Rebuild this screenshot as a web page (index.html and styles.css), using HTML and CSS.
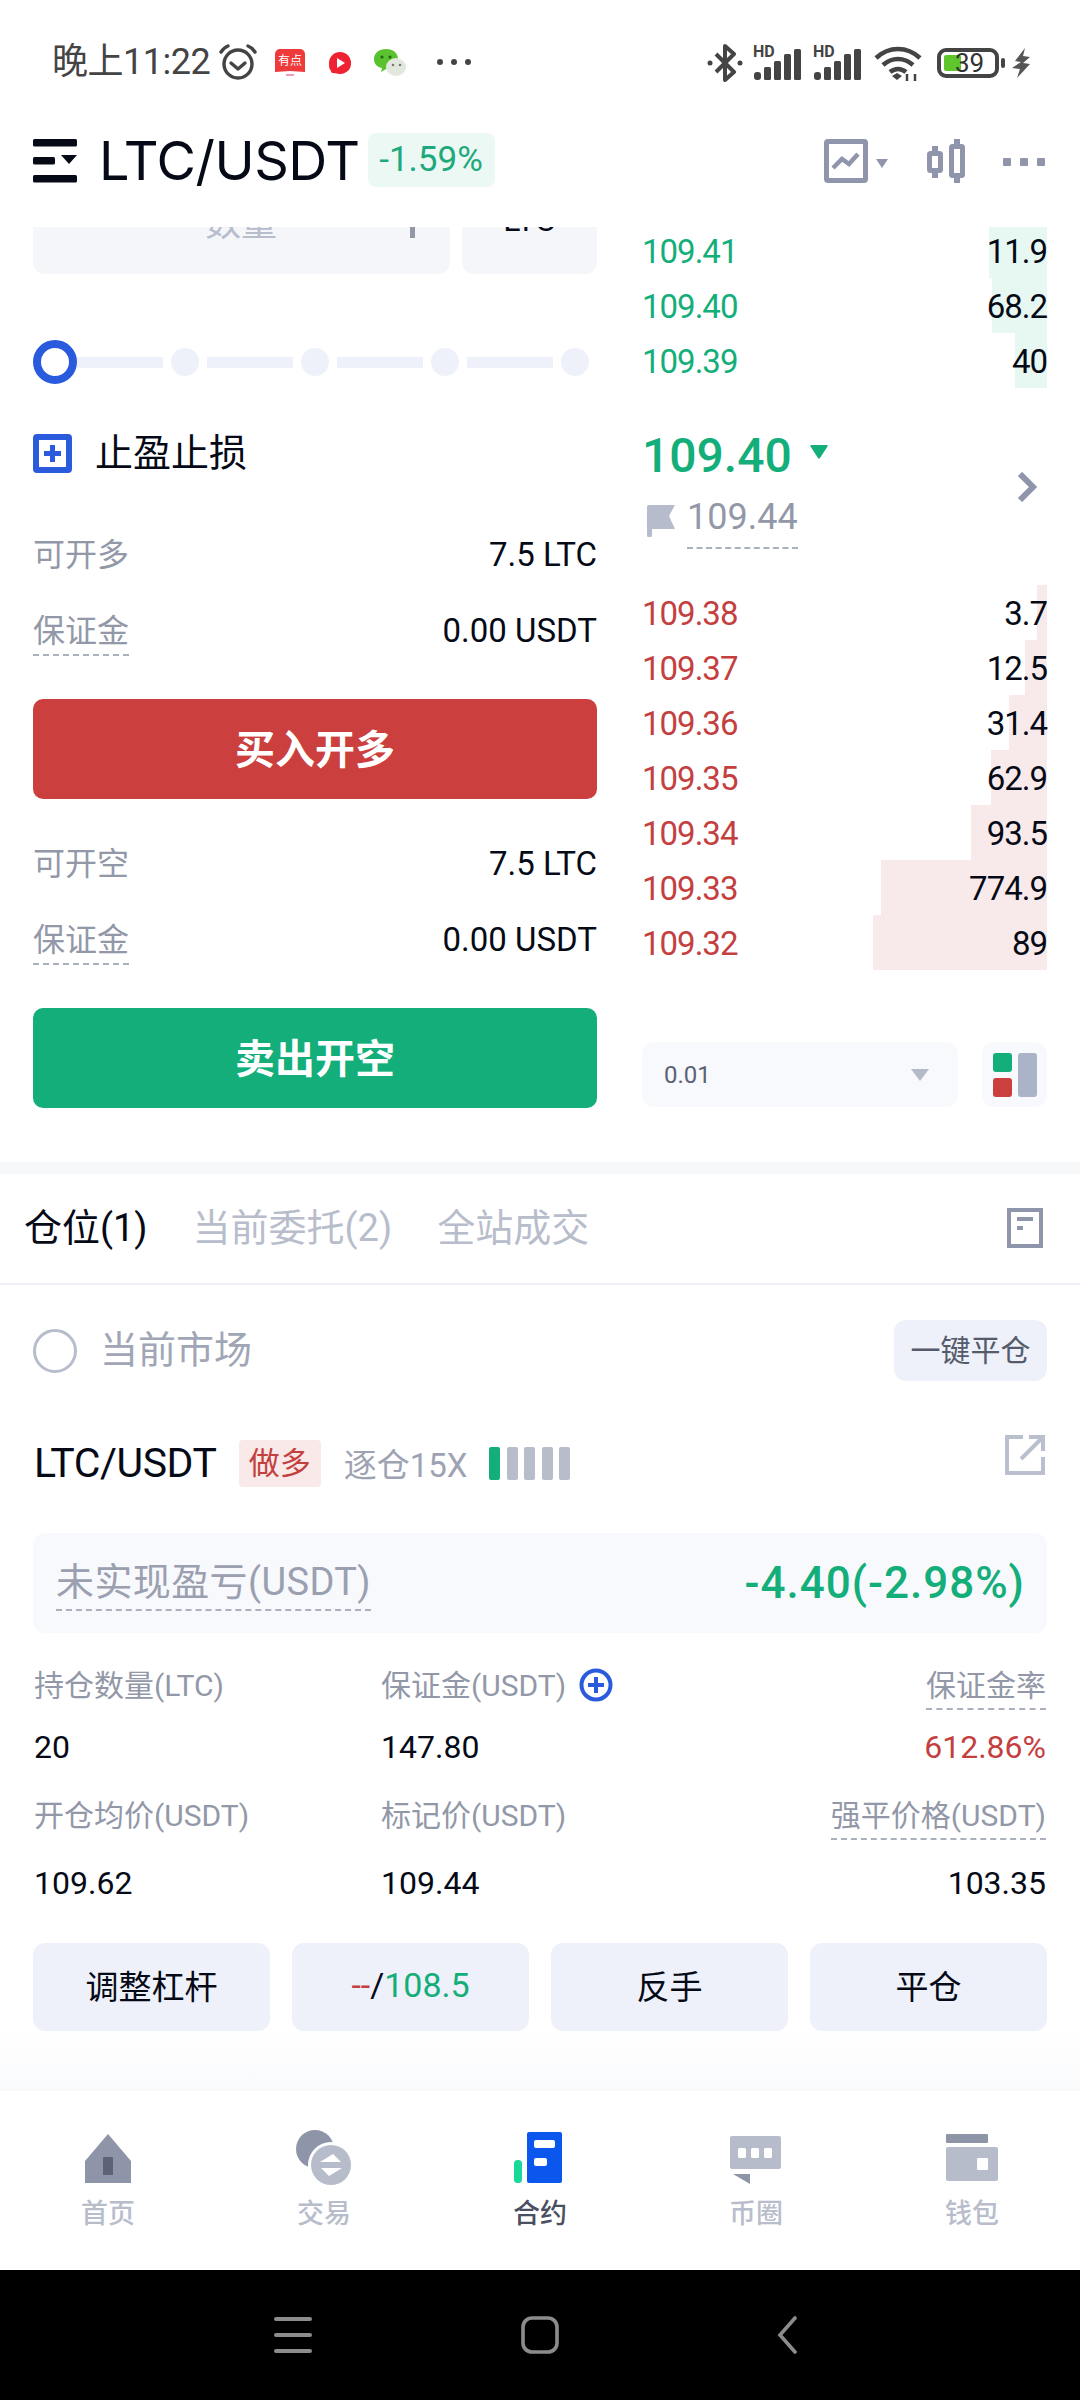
FILE: index.html
```html
<!DOCTYPE html>
<html lang="zh-CN">
<head>
  <meta charset="UTF-8" />
  <meta name="viewport" content="width=device-width, initial-scale=1.0"/>
  <title>LTC/USDT</title>
  <link rel="stylesheet" href="styles.css">
</head>
<body>
  <div class="status">
    <span class="clock">晚上11:22</span>
    <svg class="ic-alarm" width="40" height="38" viewBox="0 0 40 38" fill="none" stroke="#444" stroke-width="3.4" stroke-linecap="round" stroke-linejoin="round">
      <circle cx="20" cy="21" r="14"/><path d="M13 20l7 6 7-6"/><path d="M3 9c2-3 4-5 7-6M37 9c-2-3-4-5-7-6"/>
    </svg>
    <svg class="ic-app1" width="30" height="28" viewBox="0 0 30 28">
      <path d="M5 0h20a5 5 0 0 1 5 5v18l-15-1-15 1V5a5 5 0 0 1 5-5z" fill="#ee3a3a"/>
      <text x="15" y="16" text-anchor="middle" font-size="12" fill="#fff" class="app-text">有点</text>
      <path d="M11 26h8" stroke="#f07a9a" stroke-width="1.5"/>
    </svg>
    <svg class="ic-app2" width="22" height="23" viewBox="0 0 22 23">
      <path d="M11 0a11 11 0 1 1-2 21.800C6 21 2 22 2 19 0 17 0 14 0 11A11 11 0 0 1 11 0z" fill="#ee2230"/>
      <path d="M8 6l8 5-8 5z" fill="#fff"/>
    </svg>
    <svg class="ic-app3" width="32" height="28" viewBox="0 0 32 28">
      <path d="M12 0c7 0 12 4 12 10s-5 10-12 10l-5 3 1-4C3 18 0 15 0 10 0 4 5 0 12 0z" fill="#5ac22e"/>
      <circle cx="8" cy="8" r="1.600" fill="#1f6b14"/><circle cx="16" cy="8" r="1.600" fill="#1f6b14"/>
      <ellipse cx="22" cy="18" rx="10" ry="9" fill="#e3e8de"/>
      <circle cx="19" cy="16" r="1.300" fill="#777"/><circle cx="26" cy="16" r="1.300" fill="#777"/>
    </svg>
    <span class="status-dots"><i></i><i></i><i></i></span>
    <span class="spacer"></span>
    <svg class="ic-bt" width="36" height="38" viewBox="0 0 36 38" fill="none" stroke="#444" stroke-width="4" stroke-linejoin="round">
      <path d="M9 10l18 18-9 8V2l9 8L9 28"/><circle cx="3" cy="19" r="2.500" fill="#444" stroke="none"/><circle cx="33" cy="19" r="2.500" fill="#444" stroke="none"/>
    </svg>
    <span class="signal"><b>HD</b><svg width="50" height="32" viewBox="0 0 50 32" fill="#444"><rect x="1" y="24" width="7" height="8" rx="3"/><rect x="11" y="19" width="7" height="13" rx="1.500"/><rect x="21" y="13" width="7" height="19" rx="1.500"/><rect x="31" y="6" width="7" height="26" rx="1.500"/><rect x="41" y="1" width="7" height="31" rx="1.500"/></svg></span>
    <span class="signal"><b>HD</b><svg width="50" height="32" viewBox="0 0 50 32" fill="#444"><rect x="1" y="24" width="7" height="8" rx="3"/><rect x="11" y="19" width="7" height="13" rx="1.500"/><rect x="21" y="13" width="7" height="19" rx="1.500"/><rect x="31" y="6" width="7" height="26" rx="1.500"/><rect x="41" y="1" width="7" height="31" rx="1.500"/></svg></span>
    <svg class="ic-wifi" width="48" height="36" viewBox="0 0 48 36" fill="none" stroke="#444" stroke-width="4.600">
      <path d="M2 12c13-12 31-12 44 0M9 19c9-8 21-8 30 0M16 26c5-4 11-4 16 0"/>
      <path d="M18 30l5-3 5 3-5 4z" fill="#444" stroke="none"/>
      <path d="M33 35v-7M41 35v-7" stroke-width="2.500"/>
    </svg>
    <span class="battery"><span class="battery-fill"></span><span class="battery-num">39</span></span>
    <span class="battery-nub"></span>
    <svg class="ic-bolt" width="18" height="30" viewBox="0 0 18 30"><path d="M13 0L3 13l6 1-9 6 8 1-3 9 13-14-7-1 7-6-7-1z" fill="#555"/></svg>
  </div>

  <div class="topbar">
    <svg class="ic-menu" width="44" height="44" viewBox="0 0 44 44" fill="#060a17">
      <rect y="0" width="44" height="7.500" rx="1.500"/><rect y="18" width="22" height="7.500" rx="1.500"/><path d="M28 16h16l-8 9z"/><rect y="36" width="44" height="7.500" rx="1.500"/>
    </svg>
    <span class="pair">LTC/USDT</span>
    <span class="change">-1.59%</span>
    <span class="spacer"></span>
    <svg class="ic-chart" width="44" height="44" viewBox="0 0 44 44" fill="none" stroke="#8f95aa">
      <rect x="2.500" y="2.500" width="39" height="39" rx="1.500" stroke-width="5"/><path d="M9 29l9-9 7 5 9-10" stroke-width="4.500"/>
    </svg>
    <svg class="ic-caret" width="12" height="9" viewBox="0 0 12 9"><path d="M0 0h12L6 9z" fill="#8f95aa"/></svg>
    <svg class="ic-candle" width="40" height="44" viewBox="0 0 40 44" fill="none" stroke="#8f95aa">
      <path d="M9 7v32M31 0v44" stroke-width="6"/>
      <rect x="3.500" y="14.500" width="11" height="17" rx="1" fill="#fff" stroke-width="5"/><rect x="25.500" y="7.500" width="11" height="29" rx="1" fill="#fff" stroke-width="5"/>
    </svg>
    <span class="more"><i></i><i></i><i></i></span>
  </div>

  <div class="trade">
    <div class="trade-left">
      <div class="amount-row">
        <div class="amount-input"><span class="placeholder">数量</span><span class="caret"></span></div>
        <div class="amount-unit">LTC</div>
      </div>

      <div class="slider">
        <span class="knob"></span>
        <span class="track"></span><span class="dot"></span>
        <span class="track"></span><span class="dot"></span>
        <span class="track"></span><span class="dot"></span>
        <span class="track"></span><span class="dot"></span>
      </div>

      <div class="tpsl">
        <svg width="39" height="39" viewBox="0 0 39 39"><rect x="3" y="3" width="33" height="33" rx="1" fill="#fff" stroke="#2a5bdc" stroke-width="6"/><path d="M19.500 11v17M11 19.500h17" stroke="#2a5bdc" stroke-width="5"/></svg>
        <span>止盈止损</span>
      </div>

      <div class="info first"><span class="info-label">可开多</span><span class="info-value">7.5 LTC</span></div>
      <div class="info"><span class="info-label dashed">保证金</span><span class="info-value">0.00 USDT</span></div>
      <button class="action buy">买入开多</button>

      <div class="info first sell-first"><span class="info-label">可开空</span><span class="info-value">7.5 LTC</span></div>
      <div class="info"><span class="info-label dashed">保证金</span><span class="info-value">0.00 USDT</span></div>
      <button class="action sell">卖出开空</button>
    </div>

    <div class="trade-right">
      <div class="book">
        <div class="level ask"><i style="width:58px"></i><span class="price">109.41</span><span class="qty">11.9</span></div>
        <div class="level ask"><i style="width:55px"></i><span class="price">109.40</span><span class="qty">68.2</span></div>
        <div class="level ask"><i style="width:32px"></i><span class="price">109.39</span><span class="qty">40</span></div>
      </div>

      <div class="last">
        <div class="last-main">
          <div class="last-price"><span>109.40</span><svg width="18" height="14" viewBox="0 0 18 14"><path d="M1 0h16q1 0 .5 1.500L10 13q-1 1-2 0L.5 1.500Q0 0 1 0z" fill="#13ae7a"/></svg></div>
          <div class="mark">
            <svg width="28" height="32" viewBox="0 0 28 32"><path d="M0 2a2 2 0 0 1 2-2h26l-6 11 6 13H5v6a2.500 2.500 0 0 1-5 0z" fill="#b6bccb"/></svg>
            <span class="dashed">109.44</span>
          </div>
        </div>
        <svg class="ic-next" width="20" height="30" viewBox="0 0 20 30"><path d="M3 2l13 13L3 28" fill="none" stroke="#9095ab" stroke-width="6"/></svg>
      </div>

      <div class="book">
        <div class="level bid"><i style="width:10px"></i><span class="price">109.38</span><span class="qty">3.7</span></div>
        <div class="level bid"><i style="width:22px"></i><span class="price">109.37</span><span class="qty">12.5</span></div>
        <div class="level bid"><i style="width:38px"></i><span class="price">109.36</span><span class="qty">31.4</span></div>
        <div class="level bid"><i style="width:56px"></i><span class="price">109.35</span><span class="qty">62.9</span></div>
        <div class="level bid"><i style="width:76px"></i><span class="price">109.34</span><span class="qty">93.5</span></div>
        <div class="level bid"><i style="width:166px"></i><span class="price">109.33</span><span class="qty">774.9</span></div>
        <div class="level bid"><i style="width:174px"></i><span class="price">109.32</span><span class="qty">89</span></div>
      </div>

      <div class="depth">
        <div class="depth-select"><span>0.01</span><svg width="18" height="12" viewBox="0 0 18 12"><path d="M0 0h18L9 12z" fill="#b4bac8"/></svg></div>
        <div class="depth-mode">
          <svg width="44" height="44" viewBox="0 0 44 44"><rect width="19" height="19" rx="3" fill="#13ae7a"/><rect y="25" width="19" height="19" rx="3" fill="#cb3f3e"/><rect x="25" width="19" height="44" rx="3" fill="#abb3c9"/></svg>
        </div>
      </div>
    </div>
  </div>

  <div class="band"></div>

  <div class="tabs">
    <span class="tab active">仓位(1)</span>
    <span class="tab">当前委托(2)</span>
    <span class="tab">全站成交</span>
    <span class="spacer"></span>
    <svg width="36" height="40" viewBox="0 0 36 40" fill="none"><rect x="2" y="2" width="32" height="36" stroke="#8f95aa" stroke-width="4"/><path d="M10 11h16M10 20h6" stroke="#8f95aa" stroke-width="4"/></svg>
  </div>

  <div class="market">
    <span class="radio"></span>
    <span class="market-name">当前市场</span>
    <span class="spacer"></span>
    <button class="close-all">一键平仓</button>
  </div>

  <div class="pos-head">
    <span class="pos-pair">LTC/USDT</span>
    <span class="side">做多</span>
    <span class="margin-mode">逐仓15X</span>
    <span class="risk"><i class="on"></i><i></i><i></i><i></i><i></i></span>
    <span class="spacer"></span>
    <svg width="40" height="40" viewBox="0 0 40 40" fill="none" stroke="#b9bfcc" stroke-width="4"><path d="M18 2H2v36h36V22"/><path d="M16 24L36 4M24 2h14v14" /></svg>
  </div>

  <div class="pnl">
    <span class="pnl-label dashed">未实现盈亏(USDT)</span>
    <span class="pnl-value">-4.40(-2.98%)</span>
  </div>

  <div class="pos-grid">
    <div class="pos-label">持仓数量(LTC)</div>
    <div class="pos-label">保证金(USDT)<svg width="34" height="34" viewBox="0 0 34 34" fill="none" stroke="#2a5bdc"><circle cx="17" cy="17" r="14.500" stroke-width="4"/><path d="M17 9v16M9 17h16" stroke-width="4"/></svg></div>
    <div class="pos-label right"><span class="dashed">保证金率</span></div>
    <div class="pos-val">20</div>
    <div class="pos-val">147.80</div>
    <div class="pos-val right red">612.86%</div>
    <div class="pos-label">开仓均价(USDT)</div>
    <div class="pos-label">标记价(USDT)</div>
    <div class="pos-label right"><span class="dashed">强平价格(USDT)</span></div>
    <div class="pos-val low">109.62</div>
    <div class="pos-val low">109.44</div>
    <div class="pos-val low right">103.35</div>
  </div>

  <div class="pos-actions">
    <button>调整杠杆</button>
    <button class="tpsl-btn"><span class="red">--</span>/<span class="green">108.5</span></button>
    <button>反手</button>
    <button>平仓</button>
  </div>

  <div class="fade"></div>

  <nav class="tabbar">
    <div class="tabbar-item">
      <svg width="56" height="58" viewBox="0 0 56 58"><path d="M28 6l23 27v22H5V33z" fill="#8f95a9"/><rect x="23" y="29" width="10" height="18" fill="#5c6278"/></svg>
      <span>首页</span>
    </div>
    <div class="tabbar-item">
      <svg width="56" height="58" viewBox="0 0 56 58"><circle cx="19" cy="21" r="19" fill="#8f95a9"/><circle cx="35" cy="37" r="23" fill="#fff"/><circle cx="35" cy="37" r="20" fill="#b7bccb"/><path d="M24 34h21l-8-8zM46 40H25l8 8z" fill="#fff"/></svg>
      <span>交易</span>
    </div>
    <div class="tabbar-item active">
      <svg width="56" height="58" viewBox="0 0 56 58"><rect x="2" y="32" width="8" height="23" rx="3.500" fill="#19d99a"/><rect x="15" y="4" width="35" height="51" rx="2" fill="#0b57ee"/><rect x="22" y="12" width="21" height="8" rx="2" fill="#fff"/><rect x="22" y="30" width="13" height="8" rx="2" fill="#fff"/></svg>
      <span>合约</span>
    </div>
    <div class="tabbar-item">
      <svg width="56" height="58" viewBox="0 0 56 58"><rect x="2" y="8" width="51" height="33" rx="2" fill="#b7bccb"/><rect x="10" y="20" width="8" height="10" rx="1.500" fill="#fff"/><rect x="23" y="20" width="8" height="10" rx="1.500" fill="#fff"/><rect x="36" y="20" width="8" height="10" rx="1.500" fill="#fff"/><path d="M5 46h17v10z" fill="#8f95a9"/></svg>
      <span>币圈</span>
    </div>
    <div class="tabbar-item">
      <svg width="56" height="58" viewBox="0 0 56 58"><rect x="2" y="6" width="42" height="9" rx="1" fill="#8f95a9"/><rect x="2" y="19" width="52" height="34" rx="2" fill="#b7bccb"/><rect x="33" y="30" width="11" height="12" rx="1" fill="#fff"/></svg>
      <span>钱包</span>
    </div>
  </nav>

  <div class="softkeys">
    <svg width="38" height="36" viewBox="0 0 38 36" fill="none" stroke="#8c8c8c" stroke-width="4" stroke-linecap="round"><path d="M2 2h34M2 18h34M2 34h34"/></svg>
    <svg width="38" height="38" viewBox="0 0 38 38" fill="none" stroke="#8c8c8c" stroke-width="3.600"><rect x="2" y="2" width="34" height="34" rx="9"/></svg>
    <svg width="20" height="38" viewBox="0 0 20 38" fill="none" stroke="#8c8c8c" stroke-width="3.600" stroke-linecap="round"><path d="M18 2L3 19l15 17"/></svg>
  </div>
</body>
</html>
```

FILE: styles.css
```css
:root {
  --text: #060a17;
  --muted: #9298a8;
  --light: #b8bdcc;
  --green: #13ae7a;
  --red: #c4403f;
  --blue: #2a5bdc;
  --soft: #eef1f9;
  --softer: #f8f9fc;
}

* {
  box-sizing: border-box;
}

html, body {
  margin: 0;
  padding: 0;
}

body {
  width: 1080px;
  height: 2400px;
  overflow: hidden;
  background: #fff;
  color: var(--text);
  font-family: Roboto, "Noto Sans CJK SC", sans-serif;
}

button {
  border: none;
  font-family: inherit;
  padding: 0;
}

.spacer {
  flex: 1;
}

.dashed {
  display: inline-block;
  border-bottom: 2px dashed #aab0be;
}

.red { color: var(--red); }
.green { color: var(--green); }

/* status bar */
.status {
  height: 110px;
  padding: 44px 50px 0 52px;
  display: flex;
  align-items: flex-start;
  color: #444;
}

.clock {
  font-size: 36px;
  line-height: 36px;
  width: 166px;
  letter-spacing: -0.5px;
}

.app-text {
  font-family: "Noto Sans CJK SC", sans-serif;
}

.ic-app1 { margin: 5px 0 0 17px; }
.ic-app2 { margin: 8px 0 0 24px; }
.ic-app3 { margin: 5px 0 0 23px; }
.ic-alarm { margin-top: -1px; }

.status-dots {
  display: flex;
  gap: 8px;
  margin: 15px 0 0 31px;
}

.status-dots i {
  width: 6px;
  height: 6px;
  border-radius: 50%;
  background: #444;
}

.signal {
  position: relative;
  width: 50px;
  height: 38px;
  margin-left: 10px;
}

.signal:first-of-type { margin-left: 12px; }

.signal b {
  position: absolute;
  left: 0;
  top: 0;
  font-size: 16px;
  line-height: 16px;
  font-weight: 700;
}

.signal svg {
  position: absolute;
  left: 0;
  top: 4px;
}

.ic-wifi { margin: 2px 0 0 11px; }

.battery {
  position: relative;
  width: 62px;
  height: 30px;
  margin: 4px 0 0 15px;
  border: 4px solid #444;
  border-radius: 9px;
}

.battery-fill {
  position: absolute;
  left: 3px;
  top: 3px;
  bottom: 3px;
  width: 17px;
  background: #5fc52c;
  border-radius: 2px;
}

.battery-num {
  position: absolute;
  left: 14px;
  top: -3px;
  font-size: 26px;
  line-height: 28px;
  color: #333;
}

.battery-nub {
  width: 4px;
  height: 10px;
  margin: 14px 0 0 2px;
  background: #444;
  border-radius: 2px;
}

.ic-bolt { margin: 4px 0 0 7px; }

/* top bar */
.topbar {
  height: 117px;
  padding: 29px 35px 0 33px;
  display: flex;
  align-items: flex-start;
}

.pair {
  margin-left: 22px;
  font-family: Inter, sans-serif;
  font-size: 54px;
  line-height: 44px;
  letter-spacing: -0.5px;
}

.change {
  margin: -6px 0 0 8px;
  width: 127px;
  height: 54px;
  background: #ecf8f4;
  border-radius: 8px;
  color: #1ea97c;
  font-size: 35px;
  line-height: 54px;
  text-align: center;
}

.ic-caret { margin: 20px 0 0 8px; }
.ic-candle { margin-left: 38px; }

.more {
  display: flex;
  gap: 9px;
  margin: 19px 0 0 37px;
}

.more i {
  width: 8px;
  height: 8px;
  background: #8f95aa;
  border-radius: 1px;
}

/* trade panel */
.trade {
  height: 935px;
  padding: 0 33px;
  display: flex;
  justify-content: space-between;
  overflow: hidden;
}

.trade-left {
  width: 564px;
}

.trade-right {
  width: 405px;
}

.amount-row {
  display: flex;
  gap: 12px;
  height: 108px;
  margin-top: -61px;
}

.amount-input, .amount-unit {
  display: flex;
  align-items: center;
  background: #f4f6fa;
  border-radius: 12px;
  height: 108px;
}

.amount-input {
  width: 417px;
  padding: 0 35px 0 172px;
  justify-content: space-between;
}

.placeholder {
  font-size: 36px;
  color: var(--light);
}

.caret {
  width: 5px;
  height: 36px;
  background: #9298a8;
}

.amount-unit {
  width: 135px;
  justify-content: center;
  font-size: 32px;
}

.slider {
  display: flex;
  align-items: center;
  height: 44px;
  margin-top: 66px;
}

.knob {
  width: 44px;
  height: 44px;
  flex: none;
  border: 8px solid var(--blue);
  border-radius: 50%;
}

.track {
  width: 86px;
  height: 11px;
  background: var(--soft);
}

.dot {
  width: 28px;
  height: 28px;
  margin: 0 8px;
  background: var(--soft);
  border-radius: 50%;
}

.tpsl {
  display: flex;
  align-items: center;
  gap: 23px;
  height: 39px;
  margin-top: 50px;
  font-size: 38px;
}

.tpsl span {
  margin-top: -8px;
}

.info {
  display: flex;
  justify-content: space-between;
  align-items: flex-start;
  height: 48px;
  margin-top: 28px;
}

.info.first {
  margin-top: 59px;
}

.info.sell-first {
  margin-top: 42px;
}

.info-label {
  font-size: 32px;
  line-height: 46px;
  color: var(--muted);
}

.info-value {
  font-size: 33px;
  line-height: 46px;
}

.action {
  display: block;
  width: 100%;
  height: 100px;
  margin-top: 43px;
  padding-bottom: 5px;
  border-radius: 10px;
  color: #fff;
  font-size: 40px;
  font-weight: 700;
}

.buy { background: #cb3f3e; }
.sell { background: var(--green); }

/* order book */
.book {
  margin-top: -4px;
}

.last + .book {
  margin-top: 0;
}

.level {
  position: relative;
  display: flex;
  justify-content: space-between;
  align-items: center;
  height: 55px;
  font-size: 33px;
}

.level i {
  position: absolute;
  right: 0;
  top: 0;
  bottom: 0;
}

.level span {
  position: relative;
  top: 1px;
  letter-spacing: -1px;
}

.ask i { background: #e7f7f1; }
.bid i { background: #f8eaea; }
.ask .price { color: var(--green); }
.bid .price { color: var(--red); }

.last {
  display: flex;
  align-items: center;
  justify-content: space-between;
  height: 197px;
  padding-right: 10px;
}

.last-price {
  display: flex;
  align-items: center;
  gap: 18px;
  margin-top: 2px;
  color: var(--green);
  font-size: 48px;
  line-height: 58px;
  font-weight: 500;
}

.last-price svg {
  margin-top: -8px;
}

.mark {
  display: flex;
  align-items: flex-start;
  gap: 12px;
  margin-top: 10px;
  padding-left: 5px;
  color: var(--muted);
  font-size: 36px;
  line-height: 44px;
}

.mark svg {
  margin-top: 10px;
}

.mark .dashed {
  padding-bottom: 8px;
}

.depth {
  display: flex;
  justify-content: space-between;
  margin-top: 72px;
}

.depth-select {
  display: flex;
  align-items: center;
  justify-content: space-between;
  width: 316px;
  height: 65px;
  padding: 0 29px 0 22px;
  background: var(--softer);
  border-radius: 12px;
  color: #5a6274;
  font-size: 24px;
}

.depth-mode {
  display: flex;
  align-items: center;
  justify-content: center;
  width: 65px;
  height: 65px;
  background: var(--softer);
  border-radius: 12px;
}

.band {
  height: 12px;
  background: #f7f8fa;
}

/* position tabs */
.tabs {
  display: flex;
  align-items: center;
  gap: 45px;
  height: 111px;
  padding: 0 37px 0 24px;
  border-bottom: 2px solid var(--soft);
}

.tab {
  margin-top: -8px;
  font-size: 38px;
  color: var(--light);
}

.tabs svg {
  margin-top: -2px;
}

.tab.active {
  color: var(--text);
}

.market {
  display: flex;
  align-items: center;
  height: 61px;
  margin-top: 35px;
  padding: 0 33px;
}

.radio {
  width: 44px;
  height: 44px;
  border: 3px solid var(--light);
  border-radius: 50%;
}

.market-name {
  margin: -8px 0 0 23px;
  font-size: 38px;
  color: #a0a6b5;
}

.close-all {
  width: 153px;
  height: 61px;
  padding-bottom: 5px;
  background: var(--soft);
  border-radius: 12px;
  color: #555b6b;
  font-size: 30px;
}

.pos-head {
  display: flex;
  align-items: center;
  height: 60px;
  margin-top: 52px;
  padding: 0 35px 0 34px;
}

.pos-pair {
  font-size: 41px;
  letter-spacing: -0.4px;
}

.side {
  margin-left: 22px;
  width: 82px;
  height: 47px;
  background: #f9e9e8;
  border-radius: 4px;
  color: var(--red);
  font-size: 31px;
  line-height: 47px;
  text-align: center;
}

.margin-mode {
  margin-left: 23px;
  font-size: 33px;
  color: #9ea3b3;
}

.risk {
  display: flex;
  gap: 6.500px;
  margin-left: 22px;
}

.risk i {
  width: 11px;
  height: 33px;
  background: var(--light);
  border-radius: 2px;
}

.risk i.on {
  background: var(--green);
}

.pos-head svg {
  margin-top: -16px;
}

.pnl {
  display: flex;
  align-items: center;
  justify-content: space-between;
  height: 100px;
  margin: 40px 33px 0;
  padding: 0 22px 0 23px;
  background: #f8f9fd;
  border-radius: 12px;
}

.pnl-label {
  font-size: 38px;
  line-height: 46px;
  padding-bottom: 4px;
  margin-top: 4px;
  letter-spacing: 0.4px;
  color: #9aa0b0;
}

.pnl-value {
  color: var(--green);
  font-size: 44px;
  font-weight: 500;
  letter-spacing: 1px;
}

.pos-grid {
  display: grid;
  grid-template-columns: 347px 1fr auto;
  margin-top: 31px;
  padding: 0 34px;
}

.pos-label {
  display: flex;
  align-items: flex-start;
  font-size: 30px;
  line-height: 44px;
  color: var(--muted);
}

.pos-label svg {
  margin: 4px 0 0 13px;
}

.right {
  justify-content: flex-end;
  text-align: right;
}

.pos-val {
  margin: 15px 0 25px;
  font-size: 32px;
  line-height: 44px;
}

.pos-val.low {
  margin: 21px 0 0;
}

.pos-actions {
  display: flex;
  gap: 22px;
  margin-top: 38px;
  padding: 0 33px;
}

.pos-actions button {
  flex: 1;
  height: 88px;
  padding-bottom: 5px;
  background: var(--soft);
  border-radius: 12px;
  color: var(--text);
  font-size: 33px;
}

.pos-actions .tpsl-btn {
  font-size: 34px;
}

.fade {
  height: 60px;
  background: linear-gradient(#fff, #f9fafc);
}

/* bottom nav */
.tabbar {
  display: grid;
  grid-template-columns: repeat(5, 1fr);
  height: 179px;
  padding-top: 37px;
  background: #fff;
}

.tabbar-item {
  display: flex;
  flex-direction: column;
  align-items: center;
  color: var(--light);
  font-size: 27px;
  line-height: 36px;
  font-weight: 500;
}

.tabbar-item svg {
  margin-bottom: 10px;
}

.tabbar-item.active {
  color: #4a5062;
}

.softkeys {
  display: flex;
  align-items: center;
  height: 130px;
  padding-left: 274px;
  gap: 209px;
  background: #000;
}

.softkeys svg:last-child {
  margin-left: 9px;
}
```
